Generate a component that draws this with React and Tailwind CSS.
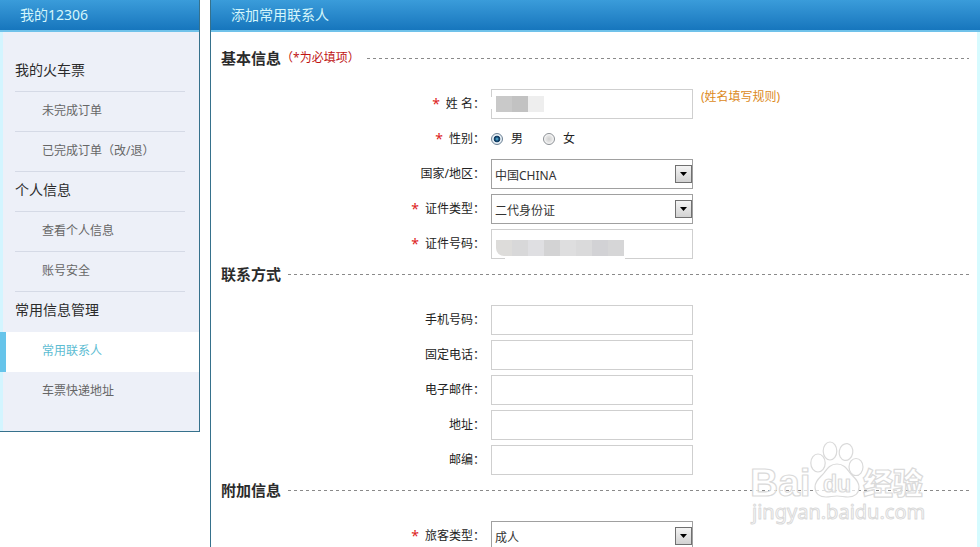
import React, { useState } from 'react';

const MENU = [
  { id: 'tickets', label: '我的火车票', group: true },
  { id: 'unfinished', label: '未完成订单' },
  { id: 'finished', label: '已完成订单（改/退）' },
  { id: 'personal', label: '个人信息', group: true },
  { id: 'profile', label: '查看个人信息' },
  { id: 'security', label: '账号安全' },
  { id: 'common', label: '常用信息管理', group: true },
  { id: 'contacts', label: '常用联系人' },
  { id: 'address', label: '车票快递地址' }
];

const NAME_BLOCKS = ['bg-[#c9c9c9]', 'bg-[#c2c2c2]', 'bg-[#eeeeee]'];
const ID_BLOCKS = [
  'bg-[#dddcda]',
  'bg-[#d8d8d9]',
  'bg-[#dfdfe2]',
  'bg-[#d3d3d4]',
  'bg-[#dededf]',
  'bg-[#dadadb]',
  'bg-[#d2d2d5]',
  'bg-[#d6d6d7]'
];

const FIELD = 'block h-[30px] w-full rounded-none border bg-white text-xs text-[#333] outline-none';

function PanelTitle({ children }) {
  return (
    <h2 className="h-8 border-b-2 border-[#70c2ea] bg-gradient-to-b from-[#3a9cda] to-[#1676bd] pl-5 text-sm leading-[30px] text-[#d4f6fb]">
      {children}
    </h2>
  );
}

function MenuItem({ item, active, last, onSelect }) {
  if (item.group) {
    return (
      <li className={`mr-3.5 ml-3 h-10 text-sm leading-9 text-[#2b2b2b] ${item.id === 'common' ? '' : 'border-b border-[#d5dae6]'}`}>
        {item.label}
      </li>
    );
  }
  if (active) {
    return (
      <li className="-ml-[3px] h-10 border-l-[6px] border-[#66c4ea] bg-white pl-9 text-xs leading-[38px]">
        <a href="#contacts" className="text-[#5cbcd2]">{item.label}</a>
      </li>
    );
  }
  return (
    <li className={`mr-3.5 ml-3 h-10 pl-[27px] text-xs leading-[38px] ${last ? '' : 'border-b border-[#d5dae6]'}`}>
      <a href={`#${item.id}`} onClick={() => onSelect(item.id)} className="text-[#666]">{item.label}</a>
    </li>
  );
}

function Section({ title, note, children }) {
  return (
    <section>
      <div className="flex h-[30px] items-center pr-2 pl-2.5">
        <h3 className="text-[15px] font-bold text-[#2b2b2b]">{title}</h3>
        {note && <span className="text-xs leading-4 text-[#c01414]">{note}</span>}
        <span className="ml-[7px] h-px flex-1 bg-[repeating-linear-gradient(to_right,#8a8a8a_0px,#8a8a8a_3px,transparent_3px,transparent_6px)]" />
      </div>
      <div className="flex flex-col gap-[5px] pt-4">{children}</div>
    </section>
  );
}

function Row({ label, htmlFor, required, hint, children }) {
  return (
    <div className="grid h-[30px] grid-cols-[274px_202px_1fr] gap-x-1.5">
      <label htmlFor={htmlFor} className="flex items-center justify-end text-xs text-[#222]">
        {required && <span className="mr-1.5 text-sm leading-4 text-[#d22]">*</span>}
        {label}：
      </label>
      <div className="relative">{children}</div>
      {hint}
    </div>
  );
}

function SelectBox({ id, options }) {
  return (
    <>
      <select id={id} className={`${FIELD} appearance-none border-[#a0a0a0] pt-1 pl-[3px]`}>
        {options.map((o) => (
          <option key={o}>{o}</option>
        ))}
      </select>
      <span className="pointer-events-none absolute top-1.5 right-px flex h-[18px] w-[17px] items-center justify-center border border-[#707070] bg-gradient-to-b from-[#f4f4f4] to-[#d2d2d2]">
        <svg width="7" height="4" viewBox="0 0 7 4">
          <path d="M0 0h7L3.5 4z" fill="#000" />
        </svg>
      </span>
    </>
  );
}

function Radio({ label, checked, onChange }) {
  return (
    <label className="flex items-center gap-2 text-xs text-[#222]">
      <input
        type="radio"
        name="sex"
        checked={checked}
        onChange={onChange}
        className="size-3 appearance-none rounded-full border border-[#8b8f94] bg-[radial-gradient(circle,#d0d0d0_0%,#e4e4e4_45%,#ffffff_75%)] checked:border-[#6c8194] checked:bg-[radial-gradient(circle_at_50%_50%,#5fc4ea_0%,#123f66_30%,#123f66_42%,#e6eef4_52%)]"
      />
      {label}
    </label>
  );
}

// Masked value shown as grey tiles over the field
function Mosaic({ blocks, className }) {
  return (
    <div className={`pointer-events-none absolute flex ${className}`}>
      {blocks.map((c, i) => (
        <span key={i} className={`size-4 ${c}`} />
      ))}
    </div>
  );
}

function Watermark() {
  return (
    <svg
      className="pointer-events-none absolute right-[50px] bottom-[18px]"
      width="182"
      height="90"
      viewBox="0 0 182 90"
      fill="#fff"
      fillOpacity="0.7"
      stroke="#dadada"
      strokeWidth="1.2"
      strokeLinejoin="round"
    >
      <text x="2" y="57" fontFamily="Liberation Sans, sans-serif" fontWeight="bold" fontSize="39">Bai</text>
      <ellipse cx="70" cy="24" rx="7.2" ry="9" />
      <ellipse cx="82" cy="12" rx="6.8" ry="9" />
      <ellipse cx="98" cy="13" rx="6.8" ry="8.5" transform="rotate(10 98 13)" />
      <ellipse cx="108" cy="28" rx="7" ry="8.5" />
      <path d="M89 25c-7 0-10 5-13 9s-9 7-9 14c0 7 5 10 11 10 4 0 7-1 11-1s7 1 11 1c6 0 11-3 11-10 0-7-6-10-9-14s-6-9-13-9z" />
      <text x="75" y="53" fontFamily="Liberation Sans, sans-serif" fontWeight="bold" fontSize="23">du</text>
      <text x="115" y="55" fontFamily="Liberation Sans, Noto Sans CJK SC, sans-serif" fontWeight="900" fontSize="30">经验</text>
      <text x="4" y="80" fontFamily="Noto Sans, sans-serif" fontSize="20" strokeWidth="1">jingyan.baidu.com</text>
    </svg>
  );
}

export default function App() {
  const [current, setCurrent] = useState('contacts');
  const [sex, setSex] = useState('男');

  return (
    <div className="relative flex h-screen items-start gap-2.5 overflow-hidden bg-white font-['Noto_Sans','Noto_Sans_CJK_SC',sans-serif]">
      <aside className="w-[200px] shrink-0 border-r border-b border-[#36718c]">
        <PanelTitle>我的12306</PanelTitle>
        <ul className="border-l-[3px] border-[#d3f5ff] bg-[#edf0f8] pt-5 pb-[19px]">
          {MENU.map((item, i) => (
            <MenuItem
              key={item.id}
              item={item}
              active={item.id === current}
              last={i === MENU.length - 1}
              onSelect={setCurrent}
            />
          ))}
        </ul>
      </aside>

      <main className="min-h-screen min-w-0 flex-1 border-l border-[#36718c]">
        <PanelTitle>添加常用联系人</PanelTitle>
        <form className="min-h-screen border-r-[3px] border-[#d6fbff] pt-[11px]">
          <Section title="基本信息" note="（*为必填项）">
            <Row
              label="姓 名"
              htmlFor="name"
              required
              hint={<a href="#rule" className="ml-0.5 text-xs leading-4 text-[#dc8a1c]">(姓名填写规则)</a>}
            >
              <input id="name" type="text" className={`${FIELD} border-[#cfcfcf] px-1`} />
              <span className="absolute top-2 left-0 h-3 w-px bg-white" />
              <Mosaic blocks={NAME_BLOCKS} className="top-[7px] left-[5px]" />
            </Row>
            <Row label="性别" required>
              <div className="flex h-[30px] items-center gap-5">
                <Radio label="男" checked={sex === '男'} onChange={() => setSex('男')} />
                <Radio label="女" checked={sex === '女'} onChange={() => setSex('女')} />
              </div>
            </Row>
            <Row label="国家/地区" htmlFor="country">
              <SelectBox id="country" options={['中国CHINA']} />
            </Row>
            <Row label="证件类型" htmlFor="idType" required>
              <SelectBox id="idType" options={['二代身份证']} />
            </Row>
            <Row label="证件号码" htmlFor="idNo" required>
              <input id="idNo" type="text" className={`${FIELD} border-[#cfcfcf] px-1`} />
              <span className="absolute bottom-0 left-3.5 h-px w-[120px] bg-white" />
              <Mosaic blocks={ID_BLOCKS} className="top-[11px] left-[5px] overflow-hidden rounded-bl-lg" />
            </Row>
          </Section>

          <Section title="联系方式">
            {['手机号码', '固定电话', '电子邮件', '地址', '邮编'].map((label) => (
              <Row key={label} label={label} htmlFor={label}>
                <input id={label} type="text" className={`${FIELD} border-[#cfcfcf] px-1`} />
              </Row>
            ))}
          </Section>

          <Section title="附加信息">
            <Row label="旅客类型" htmlFor="passenger" required>
              <SelectBox id="passenger" options={['成人']} />
            </Row>
          </Section>
        </form>
      </main>

      <Watermark />
    </div>
  );
}
